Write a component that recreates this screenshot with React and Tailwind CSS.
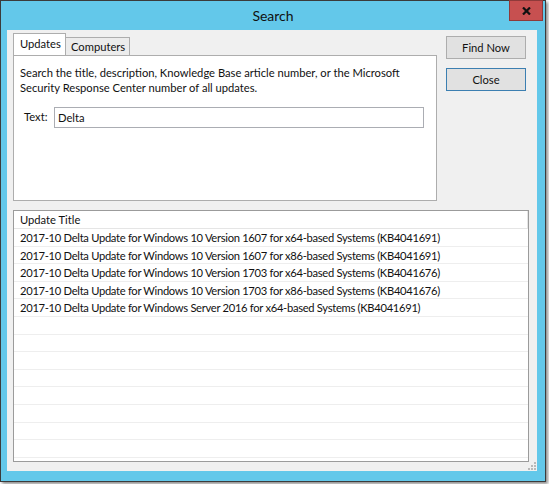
import React from "react";

const rows = [
    "2017-10 Delta Update for Windows 10 Version 1607 for x64-based Systems (KB4041691)",
    "2017-10 Delta Update for Windows 10 Version 1607 for x86-based Systems (KB4041691)",
    "2017-10 Delta Update for Windows 10 Version 1703 for x64-based Systems (KB4041676)",
    "2017-10 Delta Update for Windows 10 Version 1703 for x86-based Systems (KB4041676)",
    "2017-10 Delta Update for Windows Server 2016 for x64-based Systems (KB4041691)",
];

const font = { fontFamily: "Lato, 'Noto Sans', sans-serif" };

const App = () => {
    const filler = Array.from({ length: 8 });

    return (
        <div
            className="w-[549px] h-[484px] bg-white text-[11.2px] text-[#111] overflow-hidden"
            style={font}
        >
            <div className="w-[546px] h-[482px] border border-[#3b3b3b] bg-[#63c8ea] shadow-[2px_2px_3px_rgba(0,0,0,0.45)] flex flex-col">
                {/* title bar */}
                <div className="relative h-[29px] flex items-center justify-center shrink-0">
                    <span className="text-[14px] leading-none text-[#111]">
                        Search
                    </span>
                    <button className="absolute right-[2px] top-[-1px] w-[34px] h-[21px] bg-[#c75050] border border-[#8f3a3a] flex items-center justify-center">
                        <svg width="9" height="8" viewBox="0 0 9 8">
                            <path
                                d="M1 0.5 L8 7.5 M8 0.5 L1 7.5"
                                stroke="#111"
                                strokeWidth="2.2"
                            />
                        </svg>
                    </button>
                </div>

                {/* client area */}
                <div className="relative ml-[6px] w-[530px] h-[441px] bg-[#f0f0f0] px-[6px] pt-[4px] flex flex-col">
                    <div className="flex">
                        {/* tabs */}
                        <div className="w-[424px] flex flex-col">
                            <div className="flex items-end h-[21px] relative z-10">
                                <div className="h-[22px] w-[53px] pl-[6px] bg-white border border-b-0 border-[#adadad] leading-[20px]">
                                    Updates
                                </div>
                                <div className="h-[18px] w-[64px] pl-[5px] bg-[#ececec] border border-l-0 border-b-0 border-[#adadad] leading-[17px]">
                                    Computers
                                </div>
                            </div>
                            <div className="h-[146px] bg-white border border-[#adadad] px-[6px] pt-[9px]">
                                <p className="leading-[15px]">
                                    Search the title, description, Knowledge
                                    Base article number, or the Microsoft
                                    <br />
                                    Security Response Center number of all
                                    updates.
                                </p>
                                <div className="flex items-center mt-[12px]">
                                    <span className="w-[34px] pl-[4px]">
                                        Text:
                                    </span>
                                    <div className="w-[370px] h-[21px] border border-[#abadb3] bg-white px-[3px] leading-[19px]">
                                        Delta
                                    </div>
                                </div>
                            </div>
                        </div>

                        {/* buttons */}
                        <div className="ml-[9px] pt-[2px] flex flex-col gap-[9px]">
                            <button className="w-[80px] h-[23px] bg-[#e1e1e1] border border-[#adadad] leading-none">
                                Find Now
                            </button>
                            <button className="w-[80px] h-[23px] bg-[#e1e1e1] border border-[#3c7fb1] leading-none">
                                Close
                            </button>
                        </div>
                    </div>

                    {/* results list */}
                    <div className="mt-[9px] w-[516px] h-[252px] border border-[#9b9b9b] bg-white overflow-hidden">
                        <div className="w-[514px] h-[18px] border-b border-r border-[#e5e5e5] px-[6px] leading-[17px]">
                            Update Title
                        </div>
                        {rows.map((row, i) => (
                            <div
                                key={i}
                                className="w-[514px] h-[17.6px] border-b border-[#eeeeee] px-[6px] leading-[18px] whitespace-nowrap tracking-[-0.3px]"
                            >
                                {row}
                            </div>
                        ))}
                        {filler.map((_, i) => (
                            <div
                                key={"f" + i}
                                className="w-[514px] h-[17.6px] border-b border-[#eeeeee]"
                            />
                        ))}
                    </div>

                    {/* size grip */}
                    <svg
                        className="absolute right-[1px] bottom-[1px]"
                        width="8"
                        height="8"
                        viewBox="0 0 8 8"
                    >
                        <g fill="#b9b9b9">
                            <rect x="6" y="0" width="2" height="2" />
                            <rect x="3" y="3" width="2" height="2" />
                            <rect x="6" y="3" width="2" height="2" />
                            <rect x="0" y="6" width="2" height="2" />
                            <rect x="3" y="6" width="2" height="2" />
                            <rect x="6" y="6" width="2" height="2" />
                        </g>
                    </svg>
                </div>
            </div>
        </div>
    );
};

export default App;
